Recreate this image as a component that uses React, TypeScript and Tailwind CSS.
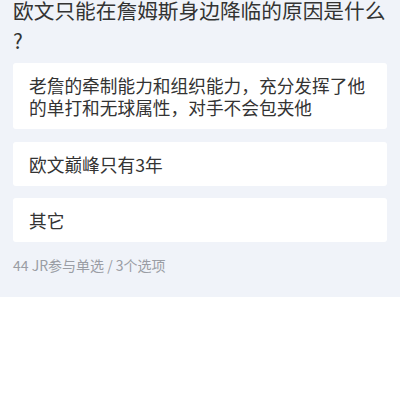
export default function App() {
  const font = { fontFamily: '"Noto Sans CJK SC", "Noto Sans", sans-serif' };
  const options = [
    "老詹的牵制能力和组织能力，充分发挥了他的单打和无球属性，对手不会包夹他",
    "欧文巅峰只有3年",
    "其它",
  ];
  return (
    <div className="w-[400px] h-[400px] bg-white overflow-hidden" style={font}>
      <div className="bg-[#f0f3f9] px-[13px] pb-[22px]">
        <div className="-mt-[5px] text-[20.7px] leading-[30px] text-[#333333] w-[374px]">
          欧文只能在詹姆斯身边降临的原因是什么
          <br />?
        </div>
        <div className="mt-[8px] flex flex-col gap-[12.5px]">
          {options.map((o) => (
            <div
              key={o}
              className="bg-white rounded-[3px] px-[16px] py-[11px] text-[17.7px] leading-[22px] text-[#333333]"
            >
              {o}
            </div>
          ))}
        </div>
        <div className="mt-[13px] text-[14px] leading-[20px] text-[#9a9da4]">
          44 JR参与单选 / 3个选项
        </div>
      </div>
    </div>
  );
}
